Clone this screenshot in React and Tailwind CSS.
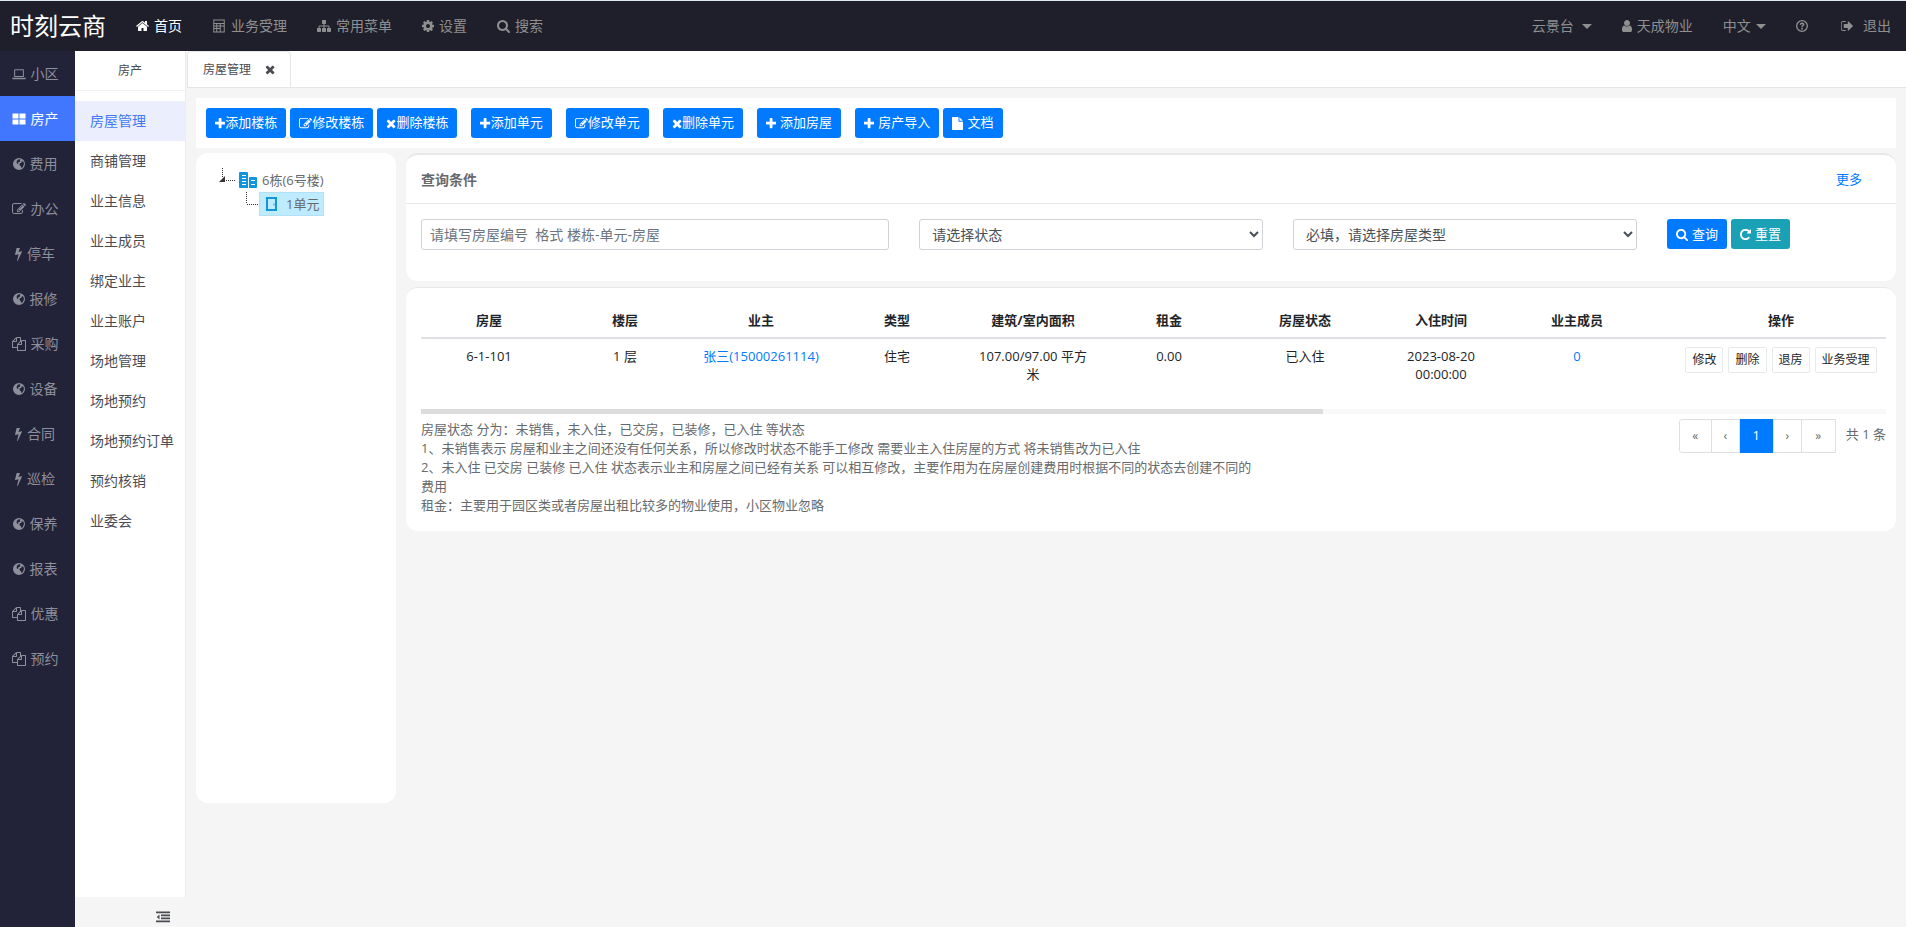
/**
 * Property admin — house management page
 *
 * Layout:
 *  - Header: brand, top menu, account menu
 *  - SideNav: module list (dark) and SubNav: pages of the module
 *  - Tabs, toolbar, building tree, search form, house table
 */
import React from 'react';
import clsx from 'clsx';

// Icon shapes, drawn on a 1792 unit grid
const ICONS = {
  home: ['64 0 1664 1792', 'M1472 992v480q0 26-19 45t-45 19h-384v-384h-256v384h-384q-26 0-45-19t-19-45v-480q0-1 .5-3t.5-3l575-474 575 474q1 2 1 6zm223-69l-62 74q-8 9-21 11h-3q-13 0-21-7l-692-577-692 577q-12 8-24 7-13-2-21-11l-62-74q-8-10-7-23.5t11-21.5l719-599q32-26 76-26t76 26l244 204v-195q0-14 9-23t23-9h192q14 0 23 9t9 23v408l219 182q10 8 11 21.5t-7 23.5z'],
  calculator: ['0 0 1792 1792', 'M160 64h1472v1664H160zM288 192v320h1216V192zM288 640v192h256V640zM672 640v192h320V640zM1120 640v192h384V640zM288 960v192h256V960zM672 960v192h320V960zM1120 960v640h384V960zM288 1280v320h256v-320zM672 1280v320h320v-320z'],
  sitemap: ['0 0 1792 1792', 'M1792 1248v320q0 40-28 68t-68 28h-320q-40 0-68-28t-28-68v-320q0-40 28-68t68-28h96v-192h-512v192h96q40 0 68 28t28 68v320q0 40-28 68t-68 28h-320q-40 0-68-28t-28-68v-320q0-40 28-68t68-28h96v-192h-512v192h96q40 0 68 28t28 68v320q0 40-28 68t-68 28h-320q-40 0-68-28t-28-68v-320q0-40 28-68t68-28h96v-192q0-52 38-90t90-38h512v-192h-96q-40 0-68-28t-28-68v-320q0-40 28-68t68-28h320q40 0 68 28t28 68v320q0 40-28 68t-68 28h-96v192h512q52 0 90 38t38 90v192h96q40 0 68 28t28 68z'],
  cog: ['128 0 1536 1792', 'M1152 896q0-106-75-181t-181-75-181 75-75 181 75 181 181 75 181-75 75-181zm512-109v222q0 12-8 23t-20 13l-185 28q-19 54-39 91 35 50 107 138 10 12 10 25t-9 23q-27 37-99 108t-94 71q-12 0-26-9l-138-108q-44 23-91 38-16 136-29 186-7 28-36 28h-222q-14 0-24.5-8.5t-11.5-21.5l-28-184q-49-16-90-37l-141 107q-10 9-25 9-14 0-25-11-126-114-165-168-7-10-7-23 0-12 8-23 15-21 51-66.5t54-70.5q-27-50-41-99l-183-27q-13-2-21-12.5t-8-23.5v-222q0-12 8-23t19-13l186-28q14-46 39-92-40-57-107-138-10-12-10-24 0-10 9-23 26-36 98.5-107.5t94.5-71.5q13 0 26 10l138 107q44-23 91-38 16-136 29-186 7-28 36-28h222q14 0 24.5 8.5t11.5 21.5l28 184q49 16 90 37l142-107q9-9 24-9 13 0 25 10 129 119 165 170 7 8 7 22 0 12-8 23-15 21-51 66.5t-54 70.5q26 50 41 98l183 28q13 2 21 12.5t8 23.5z'],
  search: ['64 0 1664 1792', 'M1216 832q0-185-131.5-316.5t-316.5-131.5-316.5 131.5-131.5 316.5 131.5 316.5 316.5 131.5 316.5-131.5 131.5-316.5zm512 832q0 52-38 90t-90 38q-54 0-90-38l-343-342q-179 124-399 124-143 0-273.5-55.5t-225-150-150-225-55.5-273.5 55.5-273.5 150-225 225-150 273.5-55.5 273.5 55.5 225 150 150 225 55.5 273.5q0 220-124 399l343 343q37 37 37 90z'],
  user: ['256 0 1280 1792', 'M1536 1399q0 109-62.5 187t-150.5 78h-854q-88 0-150.5-78t-62.5-187q0-85 8.5-160.5t31.5-152 58.5-131 94-89 134.5-34.5q131 128 313 128t313-128q76 0 134.5 34.5t94 89 58.5 131 31.5 152 8.5 160.5zm-256-887q0 159-112.5 271.5t-271.5 112.5-271.5-112.5-112.5-271.5 112.5-271.5 271.5-112.5 271.5 112.5 112.5 271.5z'],
  help: ['128 0 1536 1792', 'M896 128a768 768 0 1 0 0 1536a768 768 0 1 0 0-1536zM896 300a596 596 0 1 1 0 1192a596 596 0 1 1 0-1192zM790 1150h212v200H790zM580 700q40-260 330-260q290 20 300 260q0 130-140 210q-70 40-70 110v40H800v-60q0-130 130-200q70-40 70-95q-10-75-100-80q-90 0-130 130z'],
  signOut: ['96 0 1568 1792', 'M704 1440q0 4 1 20t.5 26.5-3 23.5-10 19.5-20.5 6.5h-320q-119 0-203.5-84.5t-84.5-203.5v-704q0-119 84.5-203.5t203.5-84.5h320q13 0 22.5 9.5t9.5 22.5q0 4 1 20t.5 26.5-3 23.5-10 19.5-20.5 6.5h-320q-66 0-113 47t-47 113v704q0 66 47 113t113 47h312l11.5 1 11.5 3 8 5.5 7 9 2 13.5zm928-544q0 26-19 45l-544 544q-19 19-45 19t-45-19-19-45v-288h-448q-26 0-45-19t-19-45v-384q0-26 19-45t45-19h448v-288q0-26 19-45t45-19 45 19l544 544q19 19 19 45z'],
  laptop: ['0 0 1792 1792', 'M352 288h1088q80 0 80 80v832q0 80-80 80H352q-80 0-80-80V368q0-80 80-80zM400 416v736h992V416zM32 1376h1728v80q0 96-96 96H128q-96 0-96-96z'],
  tiles: ['0 0 1792 1792', 'M64 192h768v640H64zM960 192h768v640H960zM64 960h768v640H64zM960 960h768v640H960z'],
  globe: ['128 0 1536 1792', 'M896 128a768 768 0 1 0 0 1536a768 768 0 1 0 0-1536zM820 330l170-50 100 60-90 90 70 70-130 130-120 40-60 130 70 70-80 40-130-110-30-150 40-160zM1200 620l200-90 110 220 10 200-70 180-90 190-170 80-30-190-150-110-60-170 100-150 150-20z'],
  edit: ['0 0 1792 1792', 'M888 1184l116-116-152-152-116 116v56h96v96h56zm440-720q-16-16-33 1l-350 350q-17 17-1 33t33-1l350-350q17-17 1-33zm80 594v190q0 119-84.5 203.5t-203.5 84.5h-832q-119 0-203.5-84.5t-84.5-203.5v-832q0-119 84.5-203.5t203.5-84.5h832q63 0 117 25 15 7 18 23 3 17-9 29l-49 49q-14 14-32 8-23-6-45-6h-832q-66 0-113 47t-47 113v832q0 66 47 113t113 47h832q66 0 113-47t47-113v-126q0-13 9-22l64-64q15-15 35-7t20 29zm-96-738l288 288-672 672h-288v-288zm444 132l-92 92-288-288 92-92q28-28 68-28t68 28l152 152q28 28 28 68t-28 68z'],
  bolt: ['448 0 896 1792', 'M1333 566q18 20 7 44l-540 1157q-13 25-42 25-4 0-14-2-17-5-25.5-19t-4.5-30l197-808-406 101q-4 1-12 1-18 0-31-11-18-15-13-39l201-825q4-14 16-23t28-9h328q19 0 32 12.5t13 29.5q0 8-5 18l-171 463 396-98q8-2 12-2 19 0 34 15z'],
  files: ['0 0 1792 1792', 'M1696 384q40 0 68 28t28 68v1216q0 40-28 68t-68 28h-960q-40 0-68-28t-28-68v-288h-544q-40 0-68-28t-28-68v-672q0-40 20-88t48-76l408-408q28-28 76-48t88-20h416q40 0 68 28t28 68v328q68-40 128-40h416zm-544 213l-299 299h299v-299zm-640-384l-299 299h299v-299zm196 647l316-316v-416h-384v416q0 40-28 68t-68 28h-416v640h512v-256q0-40 20-88t48-76zm956 804v-1152h-384v416q0 40-28 68t-68 28h-416v640h896z'],
  plus: ['192 0 1408 1792', 'M1600 736v192q0 40-28 68t-68 28h-416v416q0 40-28 68t-68 28h-192q-40 0-68-28t-28-68v-416h-416q-40 0-68-28t-28-68v-192q0-40 28-68t68-28h416v-416q0-40 28-68t68-28h192q40 0 68 28t28 68v416h416q40 0 68 28t28 68z'],
  times: ['192 0 1408 1792', 'M1490 1322q0 40-28 68l-136 136q-28 28-68 28t-68-28l-294-294-294 294q-28 28-68 28t-68-28l-136-136q-28-28-28-68t28-68l294-294-294-294q-28-28-28-68t28-68l136-136q28-28 68-28t68 28l294 294 294-294q28-28 68-28t68 28l136 136q28 28 28 68t-28 68l-294 294 294 294q28 28 28 68z'],
  file: ['128 0 1536 1792', 'M1152 512v-472q22 14 36 28l408 408q14 14 28 36h-472zm-128 32q0 40 28 68t68 28h544v1056q0 40-28 68t-68 28h-1344q-40 0-68-28t-28-68v-1600q0-40 28-68t68-28h800v544z'],
  repeat: ['128 0 1536 1792', 'M1664 256v448q0 26-19 45t-45 19h-448q-42 0-59-40-17-39 14-69l138-138q-148-137-349-137-104 0-198.5 40.5t-163.5 109.5-109.5 163.5-40.5 198.5 40.5 198.5 109.5 163.5 163.5 109.5 198.5 40.5q119 0 225-52t179-147q7-10 23-12 15 0 25 9l137 138q9 8 9.5 20.5t-7.5 22.5q-109 132-264 204.5t-327 72.5q-156 0-298-61t-245-164-164-245-61-298 61-298 164-245 245-164 298-61q147 0 284.5 55.5t244.5 156.5l130-129q29-31 70-14 39 17 39 59z'],
  outdent: ['0 0 1792 1792', 'M0 192h1792v220H0zM640 576h1152v220H640zM640 960h1152v220H640zM0 1344h1792v220H0zM448 560v640L96 880z'],
};

const Icon = ({ name, className = 'h-[14px]' }) => (
  <svg viewBox={ICONS[name][0]} className={clsx('w-auto flex-shrink-0', className)} fill="currentColor" fillRule="evenodd" aria-hidden="true">
    <path d={ICONS[name][1]} />
  </svg>
);

const Caret = () => (
  <span className="border-x-[5px] border-t-[5px] border-x-transparent border-t-current" />
);

const TOP_MENU = [
  { icon: 'home', label: '首页', active: true },
  { icon: 'calculator', label: '业务受理' },
  { icon: 'sitemap', label: '常用菜单' },
  { icon: 'cog', label: '设置' },
  { icon: 'search', label: '搜索' },
];

const MODULES = [
  { icon: 'laptop', label: '小区' },
  { icon: 'tiles', label: '房产', active: true },
  { icon: 'globe', label: '费用' },
  { icon: 'edit', label: '办公' },
  { icon: 'bolt', label: '停车' },
  { icon: 'globe', label: '报修' },
  { icon: 'files', label: '采购' },
  { icon: 'globe', label: '设备' },
  { icon: 'bolt', label: '合同' },
  { icon: 'bolt', label: '巡检' },
  { icon: 'globe', label: '保养' },
  { icon: 'globe', label: '报表' },
  { icon: 'files', label: '优惠' },
  { icon: 'files', label: '预约' },
];

const PAGES = [
  '房屋管理', '商铺管理', '业主信息', '业主成员', '绑定业主', '业主账户',
  '场地管理', '场地预约', '场地预约订单', '预约核销', '业委会',
];

// Buttons of one group sit closer together than the groups themselves
const TOOLBAR = [
  [
    { icon: 'plus', label: '添加楼栋' },
    { icon: 'edit', label: '修改楼栋' },
    { icon: 'times', label: '删除楼栋' },
  ],
  [{ icon: 'plus', label: '添加单元' }],
  [{ icon: 'edit', label: '修改单元' }],
  [{ icon: 'times', label: '删除单元' }],
  [{ icon: 'plus', label: '添加房屋', spaced: true }],
  [
    { icon: 'plus', label: '房产导入', spaced: true },
    { icon: 'file', label: '文档', spaced: true },
  ],
];

const COLUMNS = ['房屋', '楼层', '业主', '类型', '建筑/室内面积', '租金', '房屋状态', '入住时间', '业主成员'];

const HOUSES = [
  {
    no: '6-1-101',
    floor: '1 层',
    owner: '张三(15000261114)',
    type: '住宅',
    area: '107.00/97.00 平方米',
    rent: '0.00',
    state: '已入住',
    time: '2023-08-20 00:00:00',
    members: '0',
  },
];

const ROW_ACTIONS = ['修改', '删除', '退房', '业务受理'];

const NOTES = [
  '房屋状态 分为：未销售，未入住，已交房，已装修，已入住 等状态',
  '1、未销售表示 房屋和业主之间还没有任何关系，所以修改时状态不能手工修改 需要业主入住房屋的方式 将未销售改为已入住',
  '2、未入住 已交房 已装修 已入住 状态表示业主和房屋之间已经有关系 可以相互修改，主要作用为在房屋创建费用时根据不同的状态去创建不同的费用',
  '租金：主要用于园区类或者房屋出租比较多的物业使用，小区物业忽略',
];

const Header = () => (
  <header className="flex h-[51px] items-center border-t border-[#dfe8f0] bg-[#1e1f2b] pl-[10px] text-sm text-[#8f8f8f]">
    <a href="#" className="text-2xl leading-8 text-white">时刻云商</a>
    <nav className="ml-[15px] flex flex-1">
      {TOP_MENU.map((item) => (
        <a key={item.label} href="#" className={clsx('flex items-center gap-[5px] px-[15px]', item.active && 'text-white')}>
          <Icon name={item.icon} />
          {item.label}
        </a>
      ))}
    </nav>
    <div className="flex pr-[15px]">
      <button type="button" className="flex items-center gap-2 px-[15px]">云景台 <Caret /></button>
      <a href="#" className="flex items-center gap-[5px] px-[15px]"><Icon name="user" />天成物业</a>
      <button type="button" className="flex items-center gap-[5px] px-[15px]">中文 <Caret /></button>
      <a href="#" aria-label="帮助" className="flex items-center px-[15px]"><Icon name="help" /></a>
      <a href="#" className="flex items-center gap-[10px] pl-[18px]"><Icon name="signOut" />退出</a>
    </div>
  </header>
);

const SideNav = () => (
  <nav className="w-[75px] flex-shrink-0 bg-[#222338] text-sm text-[#8d8f9c]">
    {MODULES.map((item) => (
      <a
        key={item.label}
        href="#"
        className={clsx('flex h-[45px] items-center justify-center gap-[5px] pr-[5px]', item.active && 'bg-[#4177ff] text-white')}
      >
        <Icon name={item.icon} />
        {item.label}
      </a>
    ))}
  </nav>
);

const SubNav = () => (
  <aside className="flex w-[111px] flex-shrink-0 flex-col">
    <div className="flex-1 border-r border-[#ececec] bg-white">
      <h2 className="h-10 border-b border-[#f0f0f0] text-center text-xs leading-10 text-[#4a4c52]">房产</h2>
      <ul className="pt-[10px] text-sm leading-10 text-[#4a4c52]">
        {PAGES.map((page, i) => (
          <li key={page}>
            <a href="#" className={clsx('block whitespace-nowrap pl-[15px]', i === 0 && 'bg-[#ebeefc] text-[#4377f5]')}>{page}</a>
          </li>
        ))}
      </ul>
    </div>
    <div className="flex h-[30px] items-center justify-end pr-4 pt-[10px] text-[#4a4c52]">
      <button type="button" aria-label="收起菜单"><Icon name="outdent" /></button>
    </div>
  </aside>
);

const Tabs = () => (
  <div className="ml-px flex h-[37px] border-b border-[#e4e5e7] bg-white">
    <div className="flex items-center gap-[14px] rounded-t border border-b-0 border-[#e4e5e7] px-[15px] text-xs text-[#4a4c52]">
      <a href="#">房屋管理</a>
      <button type="button" aria-label="关闭"><Icon name="times" className="h-[13px]" /></button>
    </div>
  </div>
);

const ToolButton = ({ icon, label, spaced, className = 'bg-[#007bff]' }) => (
  <button
    type="button"
    className={clsx('flex h-[30px] items-center rounded-[3px] px-[9px] text-[13px] text-white', spaced && 'gap-1', className)}
  >
    <Icon name={icon} className="h-[13px]" />
    {label}
  </button>
);

const Toolbar = () => (
  <div className="flex flex-wrap gap-[14px] bg-white p-[10px]">
    {TOOLBAR.map((group) => (
      <div key={group[0].label} className="flex gap-1">
        {group.map((btn) => <ToolButton key={btn.label} {...btn} />)}
      </div>
    ))}
  </div>
);

const BuildingIcon = () => (
  <svg viewBox="0 0 18 16" className="h-4 w-[18px]" aria-hidden="true">
    <path fill="#1296db" fillRule="evenodd" d="M1 0h7q1 0 1 1v15H1q-1 0-1-1V1q0-1 1-1zM3 3v1h4V3zM3 6v1h4V6zM3 9v1h4V9zM3 12v1h4v-1zM11 5h6q1 0 1 1v9q0 1-1 1h-7V6q0-1 1-1zM12 8v1h4V8zM12 12v1h4v-1z" />
  </svg>
);

const DoorIcon = () => (
  <svg viewBox="0 0 11 14" className="h-[14px] w-[11px]" fill="none" stroke="#1296db" aria-hidden="true">
    <path d="M1 1h9v12H1z" strokeWidth="2" />
    <path d="M8 6.500v2" />
  </svg>
);

const BuildingTree = () => (
  <div className="h-[650px] w-[200px] flex-shrink-0 rounded-xl bg-white pl-[23px] pt-[15px] text-[13px] leading-6 text-[#676a6c]">
    <div className="flex h-6 items-center">
      {/* Open arrow with its dotted branch lines */}
      <svg viewBox="0 0 18 24" className="h-6 w-[18px]" aria-hidden="true">
        <path d="M3.500 0v9M7 12.500h9" stroke="#333" strokeDasharray="1 1" fill="none" />
        <path d="M6 8v6H0z" fill="#333" />
      </svg>
      <a href="#" className="flex items-center gap-[5px] pl-[2px]">
        <BuildingIcon />
        6栋(6号楼)
      </a>
    </div>
    <div className="flex h-6 items-center pl-[27px]">
      <svg viewBox="0 0 13 24" className="h-6 w-[13px]" aria-hidden="true">
        <path d="M.500 0v12M1 12.500h12" stroke="#333" strokeDasharray="1 1" fill="none" />
      </svg>
      <a href="#" className="flex h-6 items-center gap-[9px] border border-[#b0e1f8] bg-[#beebff] pl-[6px] pr-1">
        <DoorIcon />
        1单元
      </a>
    </div>
  </div>
);

const SearchPanel = () => (
  <section className="rounded-xl border-t-2 border-[#e7e8ea] bg-white">
    <div className="flex h-[49px] items-center justify-between border-b border-[#e7e8ea] pl-[15px] pr-[34px] pt-[2px] text-[#676a6c]">
      <h5 className="text-sm font-bold">查询条件</h5>
      <a href="#" className="text-[13px] text-[#007bff]">更多</a>
    </div>
    <form className="grid grid-cols-12 gap-[30px] pb-[31px] pl-[15px] pr-[10px] pt-[15px] text-sm text-[#495057]">
      <input
        type="text"
        aria-label="房屋编号"
        placeholder="请填写房屋编号  格式 楼栋-单元-房屋"
        className="col-span-4 h-[31px] rounded-[3px] border border-[#cfd2d6] px-2 placeholder:text-[#6c757d]"
      />
      <select aria-label="房屋状态" className="col-span-3 h-[31px] rounded-[3px] border border-[#cfd2d6] bg-white px-2">
        <option>请选择状态</option>
      </select>
      <select aria-label="房屋类型" className="col-span-3 h-[31px] rounded-[3px] border border-[#cfd2d6] bg-white px-2">
        <option>必填，请选择房屋类型</option>
      </select>
      <div className="col-span-2 flex gap-1">
        <ToolButton icon="search" label="查询" spaced />
        <ToolButton icon="repeat" label="重置" spaced className="bg-[#1aa1b6]" />
      </div>
    </form>
  </section>
);

const HouseTable = () => (
  <div className="overflow-hidden">
    <table className="w-[1496px] table-fixed text-center text-[13px] leading-[18px] text-[#212529]">
      <thead>
        <tr className="border-b-2 border-[#dee0e4]">
          {COLUMNS.map((col) => <th key={col} className="w-1/11 p-2 font-bold">{col}</th>)}
          <th className="w-2/11 p-2 font-bold">操作</th>
        </tr>
      </thead>
      <tbody>
        {HOUSES.map((house) => (
          <tr key={house.no} className="align-top">
            <td className="p-2">{house.no}</td>
            <td className="p-2">{house.floor}</td>
            <td className="p-2"><a href="#" className="text-[#007bff]">{house.owner}</a></td>
            <td className="p-2">{house.type}</td>
            <td className="p-2">{house.area}</td>
            <td className="p-2">{house.rent}</td>
            <td className="p-2">{house.state}</td>
            <td className="p-2">{house.time}</td>
            <td className="p-2"><a href="#" className="text-[#007bff]">{house.members}</a></td>
            <td className="p-2">
              <div className="flex justify-center gap-[5px] text-xs">
                {ROW_ACTIONS.map((action) => (
                  <button key={action} type="button" className="h-[26px] rounded-[2px] border border-[#e7eaec] bg-white px-[6px]">{action}</button>
                ))}
              </div>
            </td>
          </tr>
        ))}
      </tbody>
    </table>
  </div>
);

const Pagination = () => (
  <div className="flex justify-end gap-[10px] pt-[5px] text-[13px] text-[#676a6c]">
    <div className="flex h-[34px] divide-x divide-[#dddfe2] rounded-l-[3px] border border-[#dddfe2]">
      <button type="button" className="w-8 text-xs">«</button>
      <button type="button" className="w-7 text-xs">‹</button>
      <button type="button" className="-my-px w-[34px] bg-[#007bff] text-white">1</button>
      <button type="button" className="w-7 text-xs">›</button>
      <button type="button" className="w-[33px] text-xs">»</button>
    </div>
    <span className="leading-[30px]">共 1 条</span>
  </div>
);

const App = () => (
  <div className="flex min-h-screen flex-col bg-[#f5f5f5] font-['Open_Sans','Noto_Sans_CJK_SC',sans-serif]">
    <Header />
    <div className="flex flex-1">
      <SideNav />
      <SubNav />
      <main className="min-w-0 flex-1">
        <Tabs />
        <div className="p-[10px]">
          <Toolbar />
          <div className="flex gap-[10px] pt-[5px]">
            <BuildingTree />
            <div className="min-w-0 flex-1 space-y-[6px]">
              <SearchPanel />
              <section className="rounded-xl border-t border-[#e7e8ea] bg-white pb-4 pl-[15px] pr-[10px] pt-[15px]">
                <HouseTable />
                {/* Scroll track below the table */}
                <div className="mt-[18px] h-[5px] bg-[#f8f8f8]">
                  <div className="h-full w-8/13 bg-[#dcdcdc]" />
                </div>
                <div className="grid grid-cols-12 gap-[30px]">
                  <div className="col-span-7 pt-[6px] text-[13px] leading-[19px] text-[#676a6c]">
                    {NOTES.map((note) => <p key={note}>{note}</p>)}
                  </div>
                  <div className="col-span-5">
                    <Pagination />
                  </div>
                </div>
              </section>
            </div>
          </div>
        </div>
      </main>
    </div>
  </div>
);

export default App;
